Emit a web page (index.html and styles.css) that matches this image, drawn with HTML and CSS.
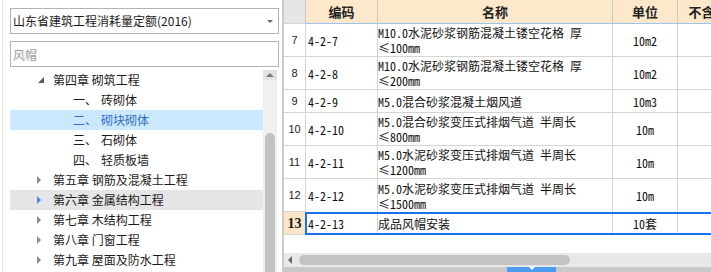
FILE: index.html
```html
<!DOCTYPE html>
<html lang="zh-CN">
<head>
    <meta charset="UTF-8">
    <title>定额库</title>
    <link rel="stylesheet" href="styles.css">
</head>
<body>
    <div class="nav">
        <div class="combo">
            <span>山东省建筑工程消耗量定额(2016)</span>
            <i class="caret"></i>
        </div>
        <input class="search" type="text" placeholder="风帽">

        <div class="tree">
            <ul class="tree-list">
                <li class="lv1"><i class="arrow open"></i>第四章 砌筑工程</li>
                <li class="lv2"><span class="num">一、</span>砖砌体</li>
                <li class="lv2 selected"><span class="num">二、</span>砌块砌体</li>
                <li class="lv2"><span class="num">三、</span>石砌体</li>
                <li class="lv2"><span class="num">四、</span>轻质板墙</li>
                <li class="lv1"><i class="arrow"></i>第五章 钢筋及混凝土工程</li>
                <li class="lv1 hover"><i class="arrow"></i>第六章 金属结构工程</li>
                <li class="lv1"><i class="arrow"></i>第七章 木结构工程</li>
                <li class="lv1"><i class="arrow"></i>第八章 门窗工程</li>
                <li class="lv1"><i class="arrow"></i>第九章 屋面及防水工程</li>
            </ul>
            <div class="vscroll">
                <div class="vscroll-up"><i></i></div>
                <div class="vscroll-thumb"></div>
            </div>
        </div>
    </div>

    <div class="grid">
        <div class="row head">
            <div class="cell c-rh"></div>
            <div class="cell c-code">编码</div>
            <div class="cell c-name">名称</div>
            <div class="cell c-unit">单位</div>
            <div class="cell c-extra">不含税基价</div>
        </div>
        <div class="row tall">
            <div class="cell c-rh">7</div>
            <div class="cell c-code">4-2-7</div>
            <div class="cell c-name">M10.0水泥砂浆钢筋混凝土镂空花格 厚≤100mm</div>
            <div class="cell c-unit">10m2</div>
            <div class="cell c-extra"></div>
        </div>
        <div class="row tall">
            <div class="cell c-rh">8</div>
            <div class="cell c-code">4-2-8</div>
            <div class="cell c-name">M10.0水泥砂浆钢筋混凝土镂空花格 厚≤200mm</div>
            <div class="cell c-unit">10m2</div>
            <div class="cell c-extra"></div>
        </div>
        <div class="row">
            <div class="cell c-rh">9</div>
            <div class="cell c-code">4-2-9</div>
            <div class="cell c-name">M5.0混合砂浆混凝土烟风道</div>
            <div class="cell c-unit">10m3</div>
            <div class="cell c-extra"></div>
        </div>
        <div class="row tall">
            <div class="cell c-rh">10</div>
            <div class="cell c-code">4-2-10</div>
            <div class="cell c-name">M5.0混合砂浆变压式排烟气道 半周长≤800mm</div>
            <div class="cell c-unit">10m</div>
            <div class="cell c-extra"></div>
        </div>
        <div class="row tall">
            <div class="cell c-rh">11</div>
            <div class="cell c-code">4-2-11</div>
            <div class="cell c-name">M5.0水泥砂浆变压式排烟气道 半周长≤1200mm</div>
            <div class="cell c-unit">10m</div>
            <div class="cell c-extra"></div>
        </div>
        <div class="row tall pre-sel">
            <div class="cell c-rh">12</div>
            <div class="cell c-code">4-2-12</div>
            <div class="cell c-name">M5.0水泥砂浆变压式排烟气道 半周长≤1500mm</div>
            <div class="cell c-unit">10m</div>
            <div class="cell c-extra"></div>
        </div>
        <div class="row current">
            <div class="cell c-rh">13</div>
            <div class="sel">
                <div class="cell c-code">4-2-13</div>
                <div class="cell c-name editing">成品风帽安装</div>
                <div class="cell c-unit">10套</div>
                <div class="cell c-extra"></div>
            </div>
        </div>

        <div class="grid-fill"></div>

        <div class="hscroll">
            <i class="hscroll-left"></i>
            <div class="hscroll-thumb"></div>
        </div>
        <div class="dock">
            <div class="dock-tab"><i></i></div>
        </div>
    </div>
</body>
</html>
```

FILE: styles.css
```css
* {
    box-sizing: border-box;
}
body {
    margin: 0;
    width: 711px;
    height: 272px;
    overflow: hidden;
    display: flex;
    font-family: "Noto Sans CJK SC", sans-serif;
    font-size: 12px;
    color: #1b1b1b;
    background: #fff;
}

/* left: quota library tree */
.nav {
    flex: none;
    width: 280px;
    margin-left: 2px;
    padding: 0 3px 0 7px;
    border-left: 1px solid #e2e2e2;
    display: flex;
    flex-direction: column;
}
.combo {
    margin-top: 8px;
    height: 26px;
    border: 1px solid #b3b3b3;
    padding: 0 5px 0 2px;
    display: flex;
    align-items: center;
    justify-content: space-between;
    line-height: 20px;
}
.caret {
    width: 0;
    height: 0;
    border-style: solid;
    border-width: 3px 3px 0 3px;
    border-color: #6a6a6a transparent transparent transparent;
}
.search {
    margin: 7px 0 0;
    height: 26px;
    width: 100%;
    border: 1px solid #b3b3b3;
    padding: 0 2px;
    font-family: inherit;
    font-size: 12px;
    outline: none;
}
.search::placeholder {
    color: #9c9c9c;
}
.tree {
    margin-top: 3px;
    flex: 1;
    display: flex;
    min-height: 0;
}
.tree-list {
    list-style: none;
    margin: 0;
    padding: 0;
    width: 253px;
    overflow: hidden;
}
.tree-list li {
    height: 20px;
    line-height: 20px;
    white-space: nowrap;
    display: flex;
    align-items: center;
}
.lv1 {
    padding-left: 27px;
}
.lv2 {
    padding-left: 63px;
}
.lv2 .num {
    margin-right: 4px;
}
.tree-list li.selected {
    background: #cce8ff;
    color: #2f6ec6;
}
.tree-list li.hover {
    background: #e5e5e5;
}
.arrow {
    flex: none;
    width: 16px;
    height: 8px;
    position: relative;
}
.arrow::before {
    content: "";
    position: absolute;
    left: 0;
    top: 0;
    border-style: solid;
    border-width: 4px 0 4px 4px;
    border-color: transparent transparent transparent #8a8a8a;
}
.hover .arrow::before {
    border-left-color: #3d8ee6;
}
.arrow.open::before {
    left: 1px;
    top: 1px;
    border-width: 0 0 6px 6px;
    border-color: transparent transparent #5c5c5c transparent;
}
.vscroll {
    width: 14px;
    flex: none;
    background: #f0f0f0;
    display: flex;
    flex-direction: column;
    align-items: center;
}
.vscroll-up {
    width: 14px;
    height: 10px;
    background: #e3e3e3;
    display: flex;
    justify-content: center;
    align-items: center;
}
.vscroll-up i {
    border-style: solid;
    border-width: 0 4px 4px 4px;
    border-color: transparent transparent #7a7a7a transparent;
}
.vscroll-thumb {
    margin-top: 53px;
    width: 10px;
    flex: 1;
    background: #c2c2c2;
    border-radius: 5px 5px 0 0;
}

/* right: quota item grid */
.grid {
    flex: 1;
    min-width: 0;
    border-left: 2px solid #cbcbcb;
    display: flex;
    flex-direction: column;
    overflow: hidden;
}
.row {
    display: flex;
    height: 23px;
    flex: none;
}
.row.tall {
    height: 33px;
}
.row.head {
    height: 24px;
}
.cell {
    flex: none;
    height: 100%;
    border-right: 1px solid #d5d5d5;
    border-bottom: 1px solid #d5d5d5;
    display: flex;
    align-items: center;
    font-family: "Noto Sans Mono CJK SC", "Noto Sans CJK SC", monospace;
    font-size: 12px;
    line-height: 15px;
    color: #111;
}
.c-rh {
    width: 22px;
    justify-content: center;
    font-family: "Liberation Sans", sans-serif;
    font-size: 11px;
    color: #222;
}
.c-code {
    width: 72px;
    padding-left: 2px;
}
.c-name {
    width: 235px;
}
.c-unit {
    width: 65px;
    justify-content: center;
}
.c-extra {
    width: 87px;
    justify-content: center;
}
.head .cell {
    background: #fde8cb;
    border-bottom-color: #9cc4ee;
    border-right-color: #c9c9c9;
    justify-content: center;
    font-family: "Noto Sans CJK SC", sans-serif;
    font-size: 13px;
    font-weight: bold;
    color: #222;
    padding: 0;
}
.head .c-rh {
    background: #e6e6e6;
    border-bottom-color: #d5d5d5;
}
.pre-sel .cell:not(.c-rh) {
    border-bottom: none;
}
.current .c-rh {
    width: 21px;
    border-right: none;
    background: #fde6c8;
    font-family: "Liberation Serif", serif;
    font-size: 14px;
    font-weight: bold;
    color: #1a1a1a;
}
.sel {
    display: flex;
    height: 23px;
    border: 2px solid #1a6ff0;
    border-right: none;
}
.sel .cell {
    border-bottom: none;
}
.sel .c-code {
    width: 71px;
    padding-left: 1px;
}
.cell.editing {
    font-family: "Noto Sans CJK SC", sans-serif;
    font-size: 12px;
}
.grid-fill {
    flex: 1;
}
.hscroll {
    flex: none;
    height: 14px;
    background: #e8e8e8;
    display: flex;
    align-items: center;
    padding-left: 4px;
}
.hscroll-left {
    border-style: solid;
    border-width: 4px 4px 4px 0;
    border-color: transparent #6a6a6a transparent transparent;
}
.hscroll-thumb {
    margin-left: 7px;
    width: 271px;
    height: 10px;
    background: #c3c3c3;
    border-radius: 5px;
}
.dock {
    flex: none;
    height: 5px;
    background: #c9c9c9;
}
.dock-tab {
    margin-left: 223px;
    width: 49px;
    height: 5px;
    background: #4b9cf2;
    display: flex;
    justify-content: center;
}
.dock-tab i {
    border-style: solid;
    border-width: 3px 3px 0 3px;
    border-color: #fff transparent transparent transparent;
}
```
